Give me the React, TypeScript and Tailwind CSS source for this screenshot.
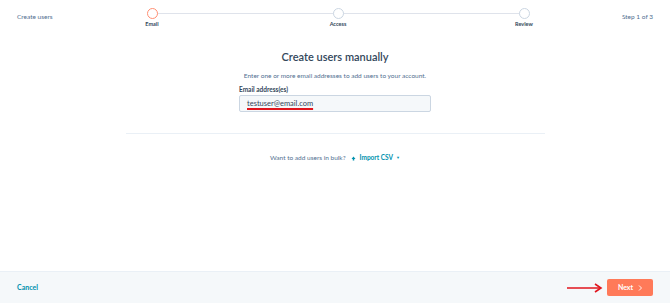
const steps = ['Email', 'Access', 'Review']

const font = "font-['Lato','Liberation_Sans',sans-serif]"

function Stepper() {
  return (
    <div className="relative flex w-[416px] justify-between">
      <div className="absolute left-[22px] right-[22px] top-[13px] h-px bg-[#dfe3eb]" />
      {steps.map((s, i) => (
        <div key={s} className="relative flex w-[44px] flex-col items-center">
          <div
            className={`mt-[8px] h-[11px] w-[11px] rounded-full border bg-white ${
              i === 0 ? 'border-[#ff8f73]' : 'border-[#cbd6e2]'
            }`}
          />
          <div className="mt-[2px] text-[5.5px] font-bold leading-[7px] text-[#33475b]">{s}</div>
        </div>
      ))}
    </div>
  )
}

function RedArrow() {
  return (
    <svg width="36" height="10" viewBox="0 0 36 10" className="mr-[4px]">
      <line x1="0" y1="5" x2="33" y2="5" stroke="#e0151d" strokeWidth="1.6" />
      <path d="M28 1 L34 5 L28 9" fill="none" stroke="#e0151d" strokeWidth="1.6" />
    </svg>
  )
}

export default function App() {
  return (
    <div className={`flex h-[303px] w-[670px] flex-col bg-white ${font}`}>
      <div className="flex flex-1 flex-col">
        {/* header */}
        <div className="flex h-[32px] items-start">
          <div className="mt-[13px] w-[130px] pl-[17px] text-[6.5px] leading-[8px] text-[#516f90]">Create users</div>
          <Stepper />
          <div className="mt-[13px] flex-1 pr-[17px] text-right text-[6.5px] leading-[8px] text-[#516f90]">Step 1 of 3</div>
        </div>

        {/* body */}
        <div className="flex flex-col items-center">
          <h1 className="mt-[18px] text-[11px] font-semibold leading-[14px] text-[#33475b]">Create users manually</h1>
          <p className="mt-[8px] text-[6.5px] leading-[8px] text-[#516f90]">
            Enter one or more email addresses to add users to your account.
          </p>
          <div className="mt-[6px] w-[192px]">
            <div className="text-[6.5px] font-bold leading-[8px] text-[#33475b]">Email address(es)</div>
            <div className="mt-[1px] flex h-[17px] items-center rounded-[2px] border border-[#cbd6e2] bg-[#f5f8fa] px-[7px]">
              <span className="text-[7.5px] leading-[9px] text-[#33475b] underline decoration-[#e0151d] decoration-[1.5px] underline-offset-[2px]">
                testuser@email.com
              </span>
            </div>
          </div>
          <div className="mt-[21px] h-px w-[419px] bg-[#eaf0f6]" />
          <div className="mt-[20px] flex items-center text-[6.5px] leading-[8px]">
            <span className="text-[#516f90]">Want to add users in bulk?</span>
            <svg width="5" height="5" viewBox="0 0 10 10" className="ml-[5px] mr-[4px]">
              <path d="M5 1 L9 6 H6.5 V9 H3.5 V6 H1 Z" fill="#0091ae" />
            </svg>
            <span className="font-bold text-[#0091ae]">Import CSV</span>
            <span className="ml-[3px] text-[4px] text-[#0091ae]">▼</span>
          </div>
        </div>
      </div>

      {/* footer */}
      <div className="flex h-[32px] items-center justify-between border-t border-[#eaf0f6] bg-[#f5f8fa] pl-[17px] pr-[17px]">
        <span className="text-[7px] font-bold text-[#0091ae]">Cancel</span>
        <div className="flex items-center">
          <RedArrow />
          <div className="flex h-[17px] w-[46px] items-center justify-center gap-[5px] rounded-[2px] bg-[#ff7a59] text-[7px] font-bold text-white">
            <span>Next</span>
            <svg width="4" height="6" viewBox="0 0 4 6">
              <path d="M1 0.5 L3.5 3 L1 5.5" fill="none" stroke="white" strokeWidth="0.9" />
            </svg>
          </div>
        </div>
      </div>
    </div>
  )
}
